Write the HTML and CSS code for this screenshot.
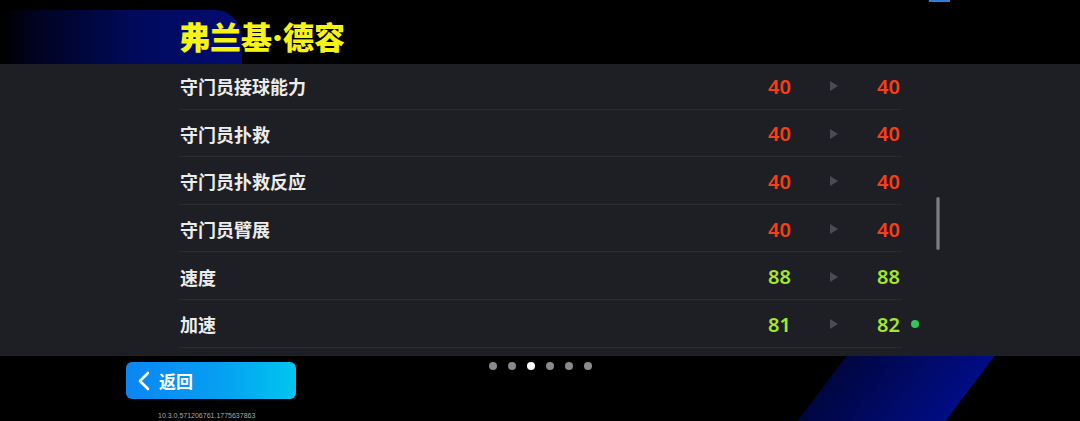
FILE: index.html
```html
<!DOCTYPE html>
<html lang="zh-CN">
<head>
  <meta charset="UTF-8" />
  <meta name="viewport" content="width=device-width, initial-scale=1.0"/>
  <title>球员能力对比</title>
  <link rel="stylesheet" href="styles.css">
</head>
<body>
  <div class="screen">
    <header class="top">
      <div class="name-glow"></div>
      <div class="top-tab"></div>
      <h1 class="player-name">弗兰基<span class="sep">·</span>德容</h1>
    </header>

    <section class="panel">
      <ul class="stats">
        <li class="stat">
          <span class="label">守门员接球能力</span>
          <span class="num low">40</span>
          <span class="arrow"></span>
          <span class="num low">40</span>
        </li>
        <li class="stat">
          <span class="label">守门员扑救</span>
          <span class="num low">40</span>
          <span class="arrow"></span>
          <span class="num low">40</span>
        </li>
        <li class="stat">
          <span class="label">守门员扑救反应</span>
          <span class="num low">40</span>
          <span class="arrow"></span>
          <span class="num low">40</span>
        </li>
        <li class="stat">
          <span class="label">守门员臂展</span>
          <span class="num low">40</span>
          <span class="arrow"></span>
          <span class="num low">40</span>
        </li>
        <li class="stat">
          <span class="label">速度</span>
          <span class="num high">88</span>
          <span class="arrow"></span>
          <span class="num high">88</span>
        </li>
        <li class="stat">
          <span class="label">加速</span>
          <span class="num high">81</span>
          <span class="arrow"></span>
          <span class="num high">82</span>
          <span class="up-dot"></span>
        </li>
      </ul>
      <div class="scrollbar"></div>
    </section>

    <footer class="bottom">
      <div class="stripe"></div>
      <div class="pager">
        <span class="dot"></span>
        <span class="dot"></span>
        <span class="dot active"></span>
        <span class="dot"></span>
        <span class="dot"></span>
        <span class="dot"></span>
      </div>
      <div class="back-area">
        <button class="back-btn">
          <svg width="14" height="20" viewBox="0 0 14 20"><polyline points="11,2 3,10 11,18" fill="none" stroke="#fff" stroke-width="2.6" stroke-linecap="round" stroke-linejoin="round"/></svg>
          <span>返回</span>
        </button>
        <div class="version">10.3.0.571206761.1775637863</div>
      </div>
    </footer>
  </div>
</body>
</html>
```

FILE: styles.css
```css
* {
  box-sizing: border-box;
}
body {
  margin: 0;
  background: #000;
  font-family: "Noto Sans", "Noto Sans CJK SC", sans-serif;
  overflow: hidden;
}
ul {
  margin: 0;
  padding: 0;
  list-style: none;
}
.screen {
  width: 1080px;
  height: 421px;
  display: flex;
  flex-direction: column;
}
.top {
  position: relative;
  height: 64px;
  flex: none;
  display: flex;
  align-items: center;
  padding-left: 179px;
  padding-top: 8px;
}
.name-glow {
  position: absolute;
  left: 0;
  top: 10px;
  width: 242px;
  height: 54px;
  border-radius: 0 27px 0 0;
  background: linear-gradient(90deg, #000 0%, #00031f 15%, #000a5a 55%, #000c72 100%);
}
.top-tab {
  position: absolute;
  left: 929px;
  top: 0;
  width: 21px;
  height: 2px;
  background: #2a7ee0;
}
.player-name {
  position: relative;
  margin: 0;
  line-height: 1;
  font-family: "Noto Sans CJK SC", sans-serif;
  font-weight: 900;
  font-size: 31px;
  color: #f7f413;
}
.sep {
  font-family: "Noto Sans", sans-serif;
  font-weight: 900;
  margin: 0 1px;
}
.panel {
  position: relative;
  height: 292px;
  flex: none;
  background: #1e1f24;
  overflow: hidden;
}
.stats {
  width: 723px;
  margin: -2px 0 0 179px;
}
.stat {
  position: relative;
  height: 47.6px;
  display: grid;
  grid-template-columns: 1fr 60px 82px 27px;
  align-items: center;
  padding-right: 2px;
  padding-top: 2px;
  border-bottom: 1px solid #2a2b31;
}
.label {
  padding-left: 1px;
  font-family: "Noto Sans CJK SC", sans-serif;
  font-size: 18px;
  font-weight: 700;
  color: #ececec;
}
.num {
  text-align: right;
  font-size: 20px;
  font-weight: 600;
}
.low {
  color: #fb3d17;
}
.high {
  color: #a3e82a;
}
.arrow {
  justify-self: center;
  width: 0;
  height: 0;
  border-top: 5px solid transparent;
  border-bottom: 5px solid transparent;
  border-left: 8px solid #4b4c53;
  margin-left: 4px;
}
.up-dot {
  position: absolute;
  right: -17px;
  top: 50%;
  width: 8px;
  height: 8px;
  margin-top: -3px;
  border-radius: 50%;
  background: #2dc75a;
}
.scrollbar {
  position: absolute;
  left: 936px;
  top: 133px;
  width: 4px;
  height: 53px;
  border-radius: 2px;
  background: #7d7e84;
  border-left: 1px solid #5a5b60;
  border-right: 1px solid #5a5b60;
}
.bottom {
  position: relative;
  flex: 1;
  background: #000;
  overflow: hidden;
}
.stripe {
  position: absolute;
  left: 822px;
  top: 0;
  width: 148px;
  height: 65px;
  transform: skewX(-37deg);
  background: linear-gradient(90deg, #000640 0%, #000a66 55%, #000d84 100%);
}
.pager {
  position: relative;
  display: flex;
  justify-content: center;
  gap: 11px;
  padding-top: 6px;
}
.dot {
  width: 8px;
  height: 8px;
  border-radius: 50%;
  background: #8a8a8c;
}
.dot.active {
  background: #fff;
}
.back-area {
  position: relative;
  margin: -8px 0 0 126px;
  width: 170px;
}
.back-btn {
  display: flex;
  align-items: center;
  gap: 8px;
  width: 170px;
  height: 37px;
  padding: 0 0 0 11px;
  border: none;
  border-radius: 6px;
  background: linear-gradient(90deg, #0b86f2 0%, #069ff2 55%, #00c6ef 100%);
  color: #fff;
  font-family: "Noto Sans CJK SC", sans-serif;
  font-size: 17px;
  font-weight: 700;
}
.version {
  margin: 13px 0 0 32px;
  font-family: "Liberation Sans", sans-serif;
  font-size: 7px;
  color: #a8a8a8;
  white-space: nowrap;
}
```
